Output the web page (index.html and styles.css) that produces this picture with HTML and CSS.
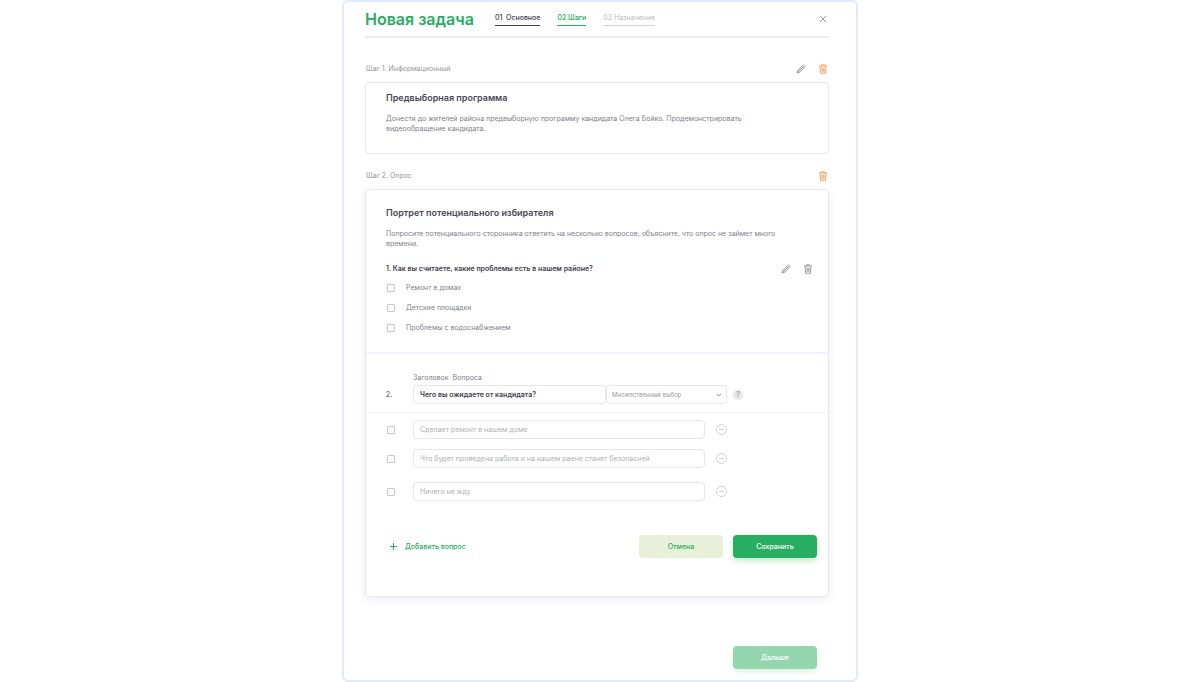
FILE: index.html
```html
<!DOCTYPE html>
<html lang="ru">
<head>
<meta charset="utf-8">
<meta name="viewport" content="width=device-width, initial-scale=1">
<title>Новая задача</title>
<link rel="stylesheet" href="styles.css">
</head>
<body>
<svg class="sprite" aria-hidden="true">
  <symbol id="pencil" viewBox="0 0 20 20"><path d="M2 18l1.300-4.800L14 2.500a1.800 1.800 0 0 1 2.500 0l1 1a1.800 1.800 0 0 1 0 2.500L6.800 16.700zM12 4.500l3.500 3.500M3.500 13l3.500 3.500M5.500 14.500l8-8"/></symbol>
  <symbol id="trash" viewBox="0 0 20 20"><path d="M2 4h16M7 4V1.500h6V4M4 4l1 14.500h10L16 4M8 7.500v8M12 7.500v8M10 7.500v8"/></symbol>
</svg>
<main class="modal">
  <header class="modal-header">
    <h1 class="title">Новая задача</h1>
    <nav class="tabs" aria-label="Этапы">
      <a class="tab tab-done" href="#main">01&nbsp; Основное</a>
      <a class="tab tab-active" href="#steps">02 Шаги</a>
      <a class="tab" href="#assign">03 Назначение</a>
    </nav>
    <button class="icon-button close" type="button" aria-label="Закрыть"><svg class="icon-close" viewBox="0 0 8 8"><path d="M1 1l6 6M7 1L1 7"/></svg></button>
  </header>

  <section class="step step-info">
    <div class="step-header">
      <h2 class="step-label">Шаг 1. Информационный</h2>
      <div class="actions">
        <button class="icon-button" type="button" aria-label="Изменить"><svg class="icon"><use href="#pencil"/></svg></button>
        <button class="icon-button danger" type="button" aria-label="Удалить"><svg class="icon"><use href="#trash"/></svg></button>
      </div>
    </div>
    <article class="card info">
      <h3 class="card-title">Предвыборная программа</h3>
      <p class="card-text">Донести до жителей района предвыборную программу кандидата Олега Бойко. Продемонстрировать видеообращение кандидата.</p>
    </article>
  </section>

  <section class="step">
    <div class="step-header">
      <h2 class="step-label">Шаг 2. Опрос</h2>
      <div class="actions">
        <button class="icon-button danger" type="button" aria-label="Удалить"><svg class="icon"><use href="#trash"/></svg></button>
      </div>
    </div>
    <article class="card raised">
      <div class="poll">
        <h3 class="card-title">Портрет потенциального избирателя</h3>
        <p class="card-text">Попросите потенциального сторонника ответить на несколько вопросов, объясните, что опрос не займет много времени.</p>
        <div class="question-header">
          <h4 class="question">1. Как вы считаете, какие проблемы есть в нашем районе?</h4>
          <div class="actions">
            <button class="icon-button" type="button" aria-label="Изменить вопрос"><svg class="icon"><use href="#pencil"/></svg></button>
            <button class="icon-button" type="button" aria-label="Удалить вопрос"><svg class="icon"><use href="#trash"/></svg></button>
          </div>
        </div>
        <div class="options">
          <label class="option"><input class="check" type="checkbox">Ремонт в домах</label>
          <label class="option"><input class="check" type="checkbox">Детские площадки</label>
          <label class="option"><input class="check" type="checkbox">Проблемы с водоснабжением</label>
        </div>
      </div>

      <form class="editor">
        <div class="editor-head">
          <label class="field-label" for="question">Заголовок&nbsp; Вопроса</label>
          <span class="number">2.</span>
          <div class="question-fields">
            <input class="field field-question" id="question" type="text" value="Чего вы ожидаете от кандидата?">
            <div class="select-wrap">
              <select class="field field-select" aria-label="Тип ответа"><option>Множественный выбор</option></select>
              <svg class="chevron" viewBox="0 0 6 4"><path d="M1 1l2 2 2-2"/></svg>
            </div>
          </div>
          <button class="help" type="button" aria-label="Справка">?</button>
        </div>
        <div class="answers">
          <div class="answer">
            <input class="check" type="checkbox" aria-label="Вариант 1">
            <input class="field" type="text" aria-label="Текст варианта 1" placeholder="Сделает ремонт в нашем доме">
            <button class="icon-button" type="button" aria-label="Убрать вариант 1"><svg class="icon-minus" viewBox="0 0 11 11"><circle cx="5.500" cy="5.500" r="5"/><path d="M3 5.500h5"/></svg></button>
          </div>
          <div class="answer">
            <input class="check" type="checkbox" aria-label="Вариант 2">
            <input class="field" type="text" aria-label="Текст варианта 2" placeholder="Что будет проведена работа и на нашем раене станет безопасней">
            <button class="icon-button" type="button" aria-label="Убрать вариант 2"><svg class="icon-minus" viewBox="0 0 11 11"><circle cx="5.500" cy="5.500" r="5"/><path d="M3 5.500h5"/></svg></button>
          </div>
          <div class="answer answer-last">
            <input class="check" type="checkbox" aria-label="Вариант 3">
            <input class="field" type="text" aria-label="Текст варианта 3" placeholder="Ничего не жду">
            <button class="icon-button" type="button" aria-label="Убрать вариант 3"><svg class="icon-minus" viewBox="0 0 11 11"><circle cx="5.500" cy="5.500" r="5"/><path d="M3 5.500h5"/></svg></button>
          </div>
        </div>
        <div class="editor-footer">
          <button class="add" type="button"><svg class="icon-plus" viewBox="0 0 7 7"><path d="M3.500 0v7M0 3.500h7"/></svg>Добавить вопрос</button>
          <button class="button button-soft" type="button">Отмена</button>
          <button class="button" type="button">Сохранить</button>
        </div>
      </form>
    </article>
  </section>

  <footer class="modal-footer">
    <button class="button button-next" type="button">Дальше</button>
  </footer>
</main>
</body>
</html>
```
FILE: styles.css
```css
* { box-sizing: border-box; }

body {
  margin: 0;
  background: #fff;
  color: #80808c;
  font: 7px/10px Inter, "Open Sans", sans-serif;
}

h1, h2, h3, h4, p { margin: 0; }

button, input, select { font: inherit; color: inherit; }

button {
  padding: 0;
  border: 0;
  background: none;
  cursor: pointer;
}

svg {
  display: block;
  fill: none;
  stroke: currentColor;
}

.sprite { position: absolute; width: 0; height: 0; }

.modal {
  max-width: 516px;
  margin: 0 auto;
  padding: 0 27px 11px 21px;
  border: 2px solid #dcebff;
  border-radius: 6px;
}

.modal-header {
  display: flex;
  align-items: center;
  height: 36px;
  border-bottom: 2px solid #ececee;
}

.title {
  color: #27ae60;
  font-size: 16px;
  line-height: 20px;
  font-weight: 600;
}

.tabs {
  display: flex;
  gap: 17px;
  margin-left: 21px;
}

.tab {
  padding-bottom: 2px;
  border-bottom: 1px solid #d2d2d2;
  color: #bdbdbd;
  text-decoration: none;
}

.tab-done { border-color: #3f3d4c; color: #3f3d4c; font-weight: 500; }
.tab-active { border-color: #27ae60; color: #27ae60; font-weight: 500; }

.close { margin-left: auto; padding-right: 2px; }
.icon-close { width: 8px; height: 8px; }

.step { padding-top: 16px; }
.step-info { padding-top: 25px; }

.step-header {
  display: flex;
  justify-content: space-between;
  align-items: center;
  height: 12px;
  margin-bottom: 7px;
  padding: 0 1px;
}

.step-label {
  color: #96969c;
  font-size: 7px;
  font-weight: 400;
}

.actions { display: flex; gap: 12px; }
.icon-button { color: #9c9c9c; }
.danger { color: #ff9c5c; }
.icon { width: 10px; height: 10px; stroke-width: 2; }

.card {
  border: 1px solid #e8e8ea;
  border-radius: 4px;
}

.info { padding: 9px 76px 19px 20px; }
.raised { box-shadow: 0 3px 10px #ecedf7; }

.card-title {
  margin-bottom: 10px;
  color: #494756;
  font-size: 9px;
  line-height: 12px;
  font-weight: 600;
}

.poll {
  padding: 17px 15px 19px 20px;
  border-bottom: 2px solid #eff3ff;
}

.poll .card-text { padding-right: 36px; }

.question-header {
  display: flex;
  justify-content: space-between;
  align-items: center;
  margin-top: 15px;
}

.question {
  color: #3f3d4c;
  font-size: 7px;
  font-weight: 600;
}

.options { display: grid; gap: 10px; margin-top: 9px; }

.option {
  display: flex;
  align-items: center;
  gap: 11px;
}

.check {
  appearance: none;
  flex: none;
  width: 8px;
  height: 8px;
  margin: 0 0 0 1px;
  border: 1px solid #c8c8cc;
  border-radius: 1px;
}

.check:checked { background: #27ae60; }

.editor-head {
  display: grid;
  grid-template-columns: 27px 1fr 10px;
  align-items: center;
  row-gap: 2px;
  padding: 19px 85px 8px 20px;
  border-bottom: 1px solid #f3f3f6;
}

.field-label { grid-column: 2 / 4; }
.number { color: #494756; }
.question-fields { display: flex; margin-right: 6px; }

.field {
  flex: 1;
  min-width: 0;
  height: 19px;
  padding: 0 6px;
  border: 1px solid #e6e6e8;
  border-radius: 4px;
  background: #fff;
  color: #999;
}

.field::placeholder { color: #b0b0b0; opacity: 1; }
.field-question { color: #3f3d4c; font-weight: 600; }
.select-wrap { position: relative; flex: 0 0 121px; }

.field-select {
  appearance: none;
  width: 100%;
  padding: 0 5px;
  font-size: 6px;
}

.chevron {
  position: absolute;
  top: 8px;
  right: 5px;
  width: 6px;
  height: 4px;
  color: #999;
  pointer-events: none;
}

.help {
  width: 10px;
  height: 10px;
  border-radius: 50%;
  background: #e8e8e8;
  color: #8a8a8a;
}

.answers { padding: 7px 101px 0 20px; }

.answer {
  display: flex;
  align-items: center;
  margin-bottom: 10px;
}

.answer-last { margin-top: 14px; }
.answer .check { margin-right: 18px; }
.answer .icon-button { margin-left: 11px; }
.icon-minus { width: 11px; height: 11px; color: #d2d2d2; }

.editor-footer {
  display: flex;
  align-items: center;
  gap: 10px;
  padding: 24px 11px 38px 24px;
}

.add {
  display: flex;
  align-items: center;
  gap: 8px;
  margin-right: auto;
  color: #27ae60;
  font-weight: 500;
}

.icon-plus { width: 7px; height: 7px; color: #27ae60; }

.button {
  width: 84px;
  height: 23px;
  border-radius: 4px;
  background: #27ae60;
  box-shadow: 0 3px 6px #c5ecc9;
  color: #fff;
  font-weight: 500;
}

.button-soft { background: #e9f0da; box-shadow: none; color: #27ae60; }

.modal-footer {
  display: flex;
  justify-content: flex-end;
  padding: 49px 12px 0 0;
}

.button-next { background: #94d7af; box-shadow: 0 3px 6px #dff5e3; }
```
